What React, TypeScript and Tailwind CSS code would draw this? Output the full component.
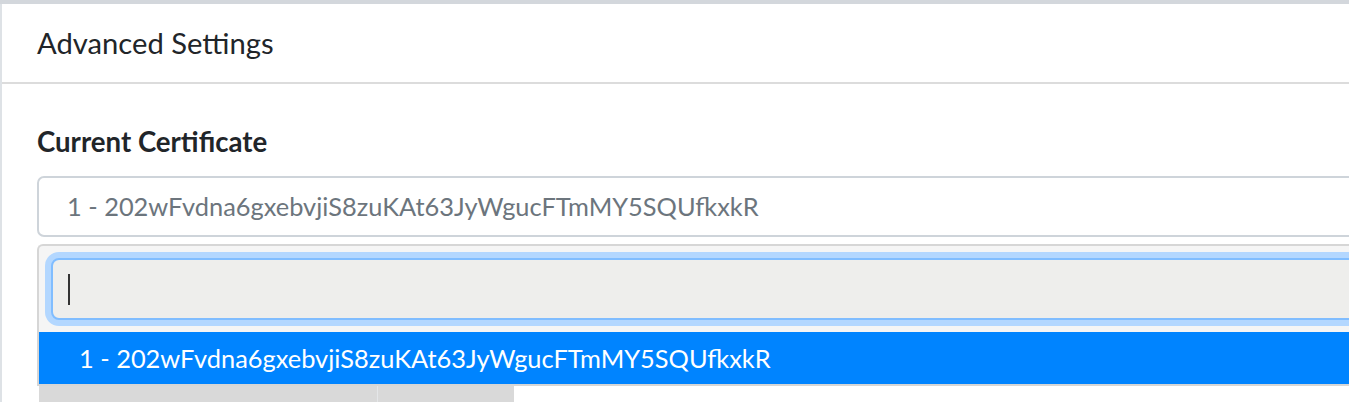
const certificate = '1 - 202wFvdna6gxebvjiS8zuKAt63JyWgucFTmMY5SQUfkxkR';

const App = () => {
  return (
    <div className="h-[402px] overflow-hidden bg-[#d3d7dc] pt-1 font-[Lato,sans-serif]">
      <div className="flex h-full w-[1500px] flex-col border-l-2 border-[#dee2e6] bg-white">
        {/* card header */}
        <div className="flex h-[80px] shrink-0 items-center border-b-2 border-[#dcdcdc] pl-[35px]">
          <h5 className="text-[29.2px] text-[#212529]">Advanced Settings</h5>
        </div>

        {/* card body */}
        <div className="pl-[35px] pt-[43px]">
          <label className="block text-[27.6px] leading-[30px] font-bold text-[#212529]">
            Current Certificate
          </label>

          <div className="mt-[19px] flex h-[61px] items-center rounded-[7px] border-2 border-[#ced4da] pl-[28px] text-[25.4px] text-[#6c757d]">
            {certificate}
          </div>

          {/* open dropdown */}
          <div className="mt-[7px] rounded-tl-[6px] border-t-2 border-l-2 border-b-2 border-[#d6d6d6] bg-[#f5f5f5]">
            <div className="p-3">
              <div className="flex h-[62px] items-center rounded-[8px] border-2 border-[#80bdff] bg-[#eeeeec] pl-[15px] shadow-[0_0_0_6px_#b3d7ff]">
                <span className="h-[31px] w-[2px] bg-[#333]" />
              </div>
            </div>
            <div className="flex h-[52px] items-center bg-[#0084ff] pl-[40px] text-[25.4px] text-white">
              {certificate}
            </div>
          </div>

          {/* page content peeking out below the dropdown */}
          <div className="flex h-[20px]">
            <div className="w-[2px]" />
            <div className="w-[338px] bg-[#d9d9d9]" />
            <div className="w-[1px] bg-[#e4e6e8]" />
            <div className="w-[136px] bg-[#d9d9d9]" />
          </div>
        </div>
      </div>
    </div>
  );
};

export default App;
